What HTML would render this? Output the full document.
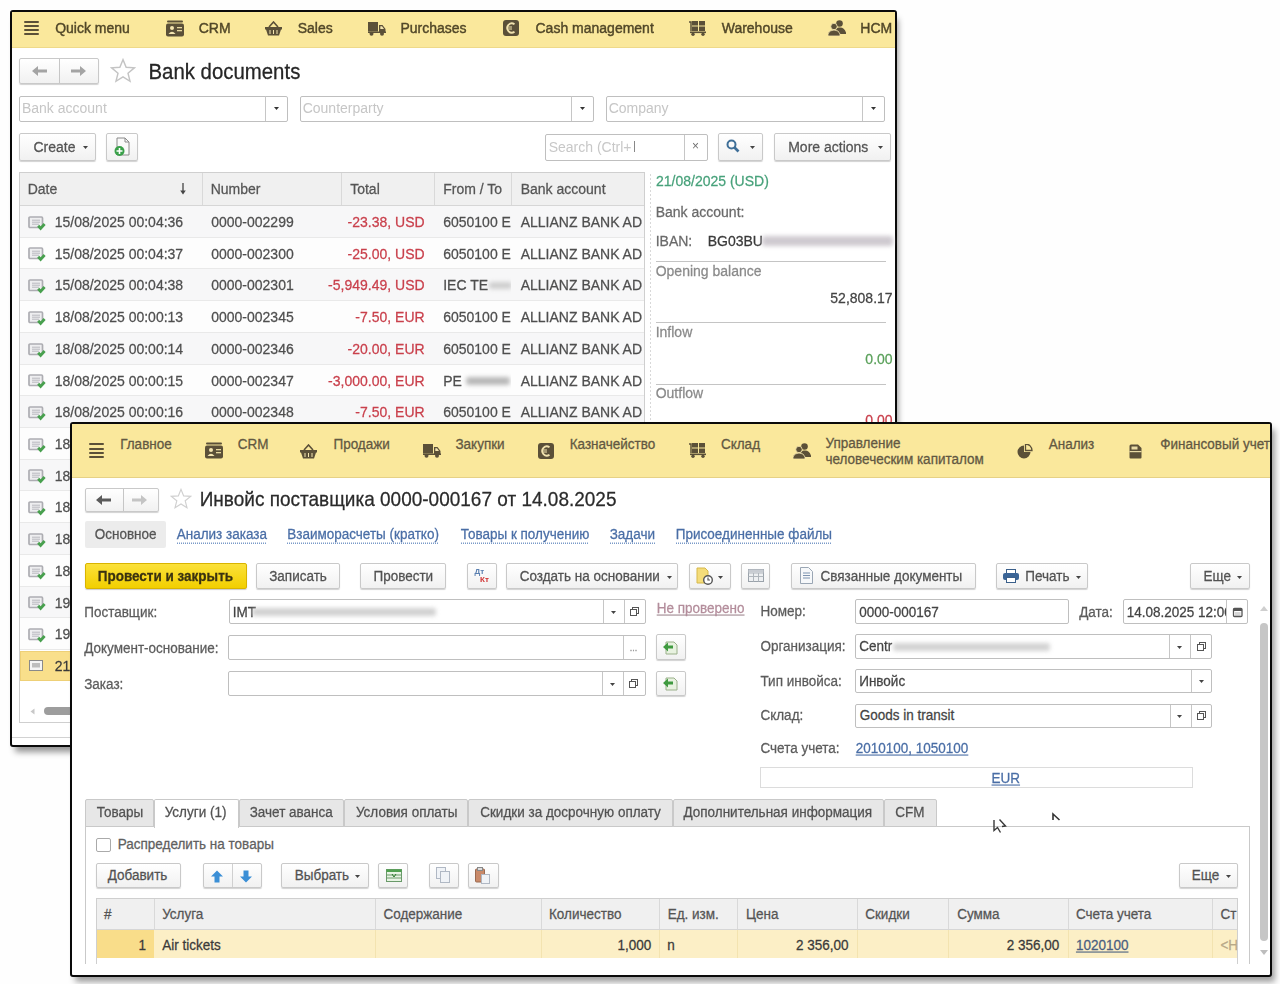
<!DOCTYPE html><html><head><meta charset="utf-8"><style>
html,body{margin:0;padding:0;width:1280px;height:984px;overflow:hidden;background:#fefefe;font-family:"Liberation Sans",sans-serif}
div{position:absolute;box-sizing:border-box}
.t{line-height:20px;white-space:nowrap;transform:scaleY(1.1);transform-origin:50% 50%;-webkit-text-stroke:0.25px currentColor}
.u{text-decoration:underline dotted;text-underline-offset:3px}
</style></head><body><div id="wrap" style="left:0;top:0;width:1280px;height:984px;filter:blur(0.35px)">
<div style="left:10.00px;top:10.00px;width:887.00px;height:737.00px;background:#fff;border:2px solid #0a0a0a;border-radius:3px;box-shadow:3px 7px 6px -2px rgba(0,0,0,0.42)"></div>
<div style="left:12.00px;top:12.00px;width:883.00px;height:36.00px;background:#fae89c;border-bottom:1px solid #eed98a"></div>
<div style="left:24.00px;top:20.60px;width:15.00px;height:2.60px;background:#5b5038;border-radius:1px"></div>
<div style="left:24.00px;top:24.60px;width:15.00px;height:2.60px;background:#5b5038;border-radius:1px"></div>
<div style="left:24.00px;top:28.60px;width:15.00px;height:2.60px;background:#5b5038;border-radius:1px"></div>
<div style="left:24.00px;top:32.60px;width:15.00px;height:2.60px;background:#5b5038;border-radius:1px"></div>
<div class="t" style="left:55.20px;top:17.00px;font-size:14px;color:#514728;font-weight:400;-webkit-text-stroke:0.4px currentColor">Quick menu</div>
<div class="t" style="left:198.70px;top:17.00px;font-size:14px;color:#514728;font-weight:400;-webkit-text-stroke:0.4px currentColor">CRM</div>
<div class="t" style="left:297.70px;top:17.00px;font-size:14px;color:#514728;font-weight:400;-webkit-text-stroke:0.4px currentColor">Sales</div>
<div class="t" style="left:400.45px;top:17.00px;font-size:14px;color:#514728;font-weight:400;-webkit-text-stroke:0.4px currentColor">Purchases</div>
<div class="t" style="left:535.50px;top:17.00px;font-size:14px;color:#514728;font-weight:400;-webkit-text-stroke:0.4px currentColor">Cash management</div>
<div class="t" style="left:721.70px;top:17.00px;font-size:14px;color:#514728;font-weight:400;-webkit-text-stroke:0.4px currentColor">Warehouse</div>
<div class="t" style="left:860.30px;top:17.00px;font-size:14px;color:#514728;font-weight:400;-webkit-text-stroke:0.4px currentColor">HCM</div>
<svg style="position:absolute;left:165.50px;top:19.50px" width="18" height="17" viewBox="0 0 18 17"><rect x="1" y="0.5" width="16" height="2" rx="1" fill="#5b5038"/><rect x="0" y="3.5" width="18" height="13" rx="2" fill="#5b5038"/><circle cx="6" cy="8" r="2" fill="#f5e6b0"/><path d="M2.5 14 Q6 9.5 9.5 14Z" fill="#f5e6b0"/><rect x="11" y="7" width="5" height="1.3" fill="#e8d9a0"/><rect x="11" y="10" width="5" height="1.3" fill="#e8d9a0"/></svg>
<svg style="position:absolute;left:264.50px;top:21.00px" width="17" height="15" viewBox="0 0 17 15"><path d="M4 6 L8.5 1 L13 6" stroke="#5b5038" stroke-width="1.6" fill="none"/><path d="M0 6H17V8.5H16L14 14.5H3L1 8.5H0Z" fill="#5b5038"/><path d="M5 9V13M8.5 9V13M12 9V13" stroke="#f5e6b0" stroke-width="1"/></svg>
<svg style="position:absolute;left:367.50px;top:21.50px" width="18" height="14" viewBox="0 0 18 14"><rect x="0" y="0" width="10" height="9.5" fill="#5b5038"/><path d="M11 3H14.5L17.5 7V10H11Z" fill="#5b5038"/><path d="M12.3 4.3H14L16 7H12.3Z" fill="#f5e6b0"/><rect x="0" y="9.5" width="18" height="1.5" fill="#5b5038"/><circle cx="3.5" cy="11.8" r="2" fill="#5b5038"/><circle cx="14" cy="11.8" r="2" fill="#5b5038"/></svg>
<svg style="position:absolute;left:503.00px;top:20.00px" width="16" height="16" viewBox="0 0 16 16"><rect x="0" y="0" width="16" height="16" rx="3" fill="#5b5038"/><path d="M11.5 4.2 A4.6 4.6 0 1 0 11.5 11.8" stroke="#f1e2ae" stroke-width="1.8" fill="none"/><path d="M4 7H9M4 9H9" stroke="#f1e2ae" stroke-width="1"/></svg>
<svg style="position:absolute;left:689.00px;top:20.50px" width="17" height="15" viewBox="0 0 17 15"><path d="M0 1H2V10" stroke="#5b5038" stroke-width="1.5" fill="none"/><rect x="3" y="0" width="6" height="4.5" fill="#5b5038"/><rect x="10" y="0" width="6" height="4.5" fill="#5b5038"/><rect x="3" y="5.5" width="6" height="4.5" fill="#5b5038"/><rect x="10" y="5.5" width="6" height="4.5" fill="#5b5038"/><rect x="1" y="10.5" width="16" height="1.6" fill="#5b5038"/><circle cx="4" cy="13.3" r="1.7" fill="#5b5038"/><circle cx="14" cy="13.3" r="1.7" fill="#5b5038"/></svg>
<svg style="position:absolute;left:827.80px;top:20.00px" width="18" height="16" viewBox="0 0 18 16"><circle cx="11.5" cy="3.5" r="3.3" fill="#5b5038"/><path d="M7 13 Q8 7 11.5 7.5 Q16 7 18 12.5V14H9Z" fill="#5b5038"/><circle cx="6" cy="6.5" r="3.2" fill="#5b5038" stroke="#f5e6b0" stroke-width="0.8"/><path d="M0 16V14 Q1 10 6 10 Q11 10 12 14V16Z" fill="#5b5038" stroke="#f5e6b0" stroke-width="0.8"/></svg>
<div style="left:18.75px;top:58.00px;width:80.00px;height:25.75px;background:linear-gradient(#ffffff,#f1f1f1);border:1px solid #c9c9c9;border-radius:2px;box-shadow:0 1px 1px rgba(0,0,0,0.18);"></div>
<div style="left:59.00px;top:59.00px;width:1.00px;height:24.00px;background:#c6c6c6"></div>
<svg style="position:absolute;left:31.50px;top:65.80px" width="15" height="10" viewBox="0 0 15 10"><path d="M0 5L6 0V3.5H15V6.5H6V10Z" fill="#a4a4a4"/></svg>
<svg style="position:absolute;left:70.70px;top:65.80px" width="15" height="10" viewBox="0 0 15 10"><path d="M15 5L9 0V3.5H0V6.5H9V10Z" fill="#a4a4a4"/></svg>
<svg style="position:absolute;left:110.00px;top:58.00px" width="26" height="26" viewBox="0 0 24 24"><path d="M12 1.5 L14.9 8.6 L22.5 9.1 L16.6 14 L18.5 21.5 L12 17.4 L5.5 21.5 L7.4 14 L1.5 9.1 L9.1 8.6Z" fill="#fff" stroke="#c4c4c4" stroke-width="1.3"/></svg>
<div class="t" style="left:148.45px;top:60.96px;font-size:20.4px;color:#262626;font-weight:400;">Bank documents</div>
<div style="left:18.75px;top:95.50px;width:269.25px;height:26.00px;background:#fff;border:1px solid #bfbfbf;border-radius:2px;"></div>
<div style="left:264.50px;top:96.00px;width:1.00px;height:25.00px;background:#c6c6c6"></div>
<div class="t" style="left:21.95px;top:97.20px;font-size:14px;color:#c6c6c6;font-weight:400;-webkit-text-stroke:0">Bank account</div>
<svg style="position:absolute;left:273.75px;top:107.00px" width="5" height="3.5" viewBox="0 0 5 3.5"><path d="M0 0H5L2.5 3Z" fill="#333"/></svg>
<div style="left:299.50px;top:95.50px;width:294.25px;height:26.00px;background:#fff;border:1px solid #bfbfbf;border-radius:2px;"></div>
<div style="left:570.50px;top:96.00px;width:1.00px;height:25.00px;background:#c6c6c6"></div>
<div class="t" style="left:302.70px;top:97.20px;font-size:14px;color:#c6c6c6;font-weight:400;-webkit-text-stroke:0">Counterparty</div>
<svg style="position:absolute;left:579.62px;top:107.00px" width="5" height="3.5" viewBox="0 0 5 3.5"><path d="M0 0H5L2.5 3Z" fill="#333"/></svg>
<div style="left:605.50px;top:95.50px;width:279.00px;height:26.00px;background:#fff;border:1px solid #bfbfbf;border-radius:2px;"></div>
<div style="left:861.75px;top:96.00px;width:1.00px;height:25.00px;background:#c6c6c6"></div>
<div class="t" style="left:608.70px;top:97.20px;font-size:14px;color:#c6c6c6;font-weight:400;-webkit-text-stroke:0">Company</div>
<svg style="position:absolute;left:870.62px;top:107.00px" width="5" height="3.5" viewBox="0 0 5 3.5"><path d="M0 0H5L2.5 3Z" fill="#333"/></svg>
<div style="left:18.75px;top:132.50px;width:76.75px;height:28.00px;background:linear-gradient(#ffffff,#f1f1f1);border:1px solid #c9c9c9;border-radius:2px;box-shadow:0 1px 1px rgba(0,0,0,0.18);"></div>
<div class="t" style="left:33.45px;top:135.50px;font-size:14px;color:#545454;font-weight:400;">Create</div>
<svg style="position:absolute;left:83.00px;top:145.50px" width="5" height="3.5" viewBox="0 0 5 3.5"><path d="M0 0H5L2.5 3Z" fill="#444"/></svg>
<div style="left:106.00px;top:132.50px;width:32.00px;height:28.00px;background:linear-gradient(#ffffff,#f1f1f1);border:1px solid #c9c9c9;border-radius:2px;box-shadow:0 1px 1px rgba(0,0,0,0.18);"></div>
<svg style="position:absolute;left:113.00px;top:137.00px" width="20" height="20" viewBox="0 0 20 20"><path d="M4 1H12L16 5V18H4Z" fill="#fafafa" stroke="#8a8a8a" stroke-width="1"/><path d="M12 1V5H16" fill="none" stroke="#8a8a8a" stroke-width="1"/><circle cx="6.5" cy="14" r="5" fill="#3aa04a"/><path d="M6.5 11V17M3.5 14H9.5" stroke="#fff" stroke-width="1.6"/></svg>
<div style="left:545.00px;top:133.75px;width:162.50px;height:26.75px;background:#fff;border:1px solid #bfbfbf;border-radius:2px;"></div>
<div class="t" style="left:548.70px;top:135.50px;font-size:14px;color:#c8c8c8;font-weight:400;-webkit-text-stroke:0">Search (Ctrl+</div>
<div style="left:633.50px;top:141.00px;width:1.00px;height:11.00px;background:#888"></div>
<div style="left:683.75px;top:134.50px;width:1.00px;height:25.50px;background:#c6c6c6"></div>
<div class="t" style="left:395.50px;width:600px;text-align:center;top:136.30px;font-size:12px;color:#707070;font-weight:400;-webkit-text-stroke:0">×</div>
<div style="left:718.00px;top:132.50px;width:45.00px;height:28.00px;background:linear-gradient(#ffffff,#f1f1f1);border:1px solid #c9c9c9;border-radius:2px;box-shadow:0 1px 1px rgba(0,0,0,0.18);"></div>
<svg style="position:absolute;left:726.00px;top:139.00px" width="14" height="15" viewBox="0 0 14 15"><circle cx="5.5" cy="5.5" r="4" stroke="#3f6f98" stroke-width="2" fill="none"/><path d="M8.5 8.5L12.5 12.5" stroke="#3f6f98" stroke-width="2.6"/></svg>
<svg style="position:absolute;left:750.00px;top:145.50px" width="5" height="3.5" viewBox="0 0 5 3.5"><path d="M0 0H5L2.5 3Z" fill="#444"/></svg>
<div style="left:773.75px;top:132.50px;width:117.50px;height:28.00px;background:linear-gradient(#ffffff,#f1f1f1);border:1px solid #c9c9c9;border-radius:2px;box-shadow:0 1px 1px rgba(0,0,0,0.18);"></div>
<div class="t" style="left:788.20px;top:135.50px;font-size:14px;color:#545454;font-weight:400;">More actions</div>
<svg style="position:absolute;left:877.50px;top:145.50px" width="5" height="3.5" viewBox="0 0 5 3.5"><path d="M0 0H5L2.5 3Z" fill="#444"/></svg>
<div style="left:18.75px;top:172.00px;width:626.25px;height:551.00px;background:#fff;border:1px solid #cfcfcf"></div>
<div style="left:19.75px;top:173.00px;width:624.25px;height:33.00px;background:#f0f0f0;border-bottom:1px solid #d6d6d6"></div>
<div style="left:202.00px;top:173.00px;width:1.00px;height:32.00px;background:#d9d9d9"></div>
<div style="left:341.20px;top:173.00px;width:1.00px;height:32.00px;background:#d9d9d9"></div>
<div style="left:434.20px;top:173.00px;width:1.00px;height:32.00px;background:#d9d9d9"></div>
<div style="left:511.20px;top:173.00px;width:1.00px;height:32.00px;background:#d9d9d9"></div>
<div class="t" style="left:27.70px;top:177.50px;font-size:14px;color:#555;font-weight:400;">Date</div>
<div class="t" style="left:210.70px;top:177.50px;font-size:14px;color:#555;font-weight:400;">Number</div>
<div class="t" style="left:350.20px;top:177.50px;font-size:14px;color:#555;font-weight:400;">Total</div>
<div class="t" style="left:443.20px;top:177.50px;font-size:14px;color:#555;font-weight:400;">From / To</div>
<div class="t" style="left:520.70px;top:177.50px;font-size:14px;color:#555;font-weight:400;">Bank account</div>
<svg style="position:absolute;left:178.50px;top:182.50px" width="8" height="12" viewBox="0 0 8 12"><path d="M4 0V10" stroke="#444" stroke-width="1.3"/><path d="M1.2 7.5L4 11.5L6.8 7.5Z" fill="#444"/></svg>
<div style="left:19.75px;top:206.00px;width:624.25px;height:31.72px;background:#f7f7f8;border-bottom:1px solid #e9e9e9"></div>
<svg style="position:absolute;left:27.60px;top:215.70px" width="18" height="15" viewBox="0 0 18 15"><rect x="1" y="1" width="13.5" height="10.5" rx="1" fill="#eeeef0" stroke="#adadb2" stroke-width="1.7"/><path d="M4 4.2H12M4 6.2H12M4 8.2H11" stroke="#b9b9be" stroke-width="1"/><path d="M10.2 9.8 L12.6 12.4 L16.6 8" stroke="#48a04e" stroke-width="2.8" fill="none"/></svg>
<div class="t" style="left:54.70px;top:211.00px;font-size:14px;color:#4f4f4f;font-weight:400;">15/08/2025 00:04:36</div>
<div class="t" style="left:211.20px;top:211.00px;font-size:14px;color:#4f4f4f;font-weight:400;">0000-002299</div>
<div class="t" style="right:855.40px;text-align:right;top:211.00px;font-size:14px;color:#c9404c;font-weight:400;">-23.38, USD</div>
<div style="left:0;top:0;width:1280px;height:984px;clip-path:inset(206.0px 769px 746.28px 434px)">
<div class="t" style="left:443.20px;top:211.00px;font-size:14px;color:#4f4f4f;font-weight:400;">6050100 E</div>
</div>
<div style="left:0;top:0;width:1280px;height:984px;clip-path:inset(206.0px 635px 746.28px 511px)">
<div class="t" style="left:520.70px;top:211.00px;font-size:14px;color:#4f4f4f;font-weight:400;">ALLIANZ BANK AD</div>
</div>
<div style="left:19.75px;top:237.72px;width:624.25px;height:31.72px;background:#fdfdfd;border-bottom:1px solid #e9e9e9"></div>
<svg style="position:absolute;left:27.60px;top:247.42px" width="18" height="15" viewBox="0 0 18 15"><rect x="1" y="1" width="13.5" height="10.5" rx="1" fill="#eeeef0" stroke="#adadb2" stroke-width="1.7"/><path d="M4 4.2H12M4 6.2H12M4 8.2H11" stroke="#b9b9be" stroke-width="1"/><path d="M10.2 9.8 L12.6 12.4 L16.6 8" stroke="#48a04e" stroke-width="2.8" fill="none"/></svg>
<div class="t" style="left:54.70px;top:242.72px;font-size:14px;color:#4f4f4f;font-weight:400;">15/08/2025 00:04:37</div>
<div class="t" style="left:211.20px;top:242.72px;font-size:14px;color:#4f4f4f;font-weight:400;">0000-002300</div>
<div class="t" style="right:855.40px;text-align:right;top:242.72px;font-size:14px;color:#c9404c;font-weight:400;">-25.00, USD</div>
<div style="left:0;top:0;width:1280px;height:984px;clip-path:inset(237.72px 769px 714.56px 434px)">
<div class="t" style="left:443.20px;top:242.72px;font-size:14px;color:#4f4f4f;font-weight:400;">6050100 E</div>
</div>
<div style="left:0;top:0;width:1280px;height:984px;clip-path:inset(237.72px 635px 714.56px 511px)">
<div class="t" style="left:520.70px;top:242.72px;font-size:14px;color:#4f4f4f;font-weight:400;">ALLIANZ BANK AD</div>
</div>
<div style="left:19.75px;top:269.44px;width:624.25px;height:31.72px;background:#f7f7f8;border-bottom:1px solid #e9e9e9"></div>
<svg style="position:absolute;left:27.60px;top:279.14px" width="18" height="15" viewBox="0 0 18 15"><rect x="1" y="1" width="13.5" height="10.5" rx="1" fill="#eeeef0" stroke="#adadb2" stroke-width="1.7"/><path d="M4 4.2H12M4 6.2H12M4 8.2H11" stroke="#b9b9be" stroke-width="1"/><path d="M10.2 9.8 L12.6 12.4 L16.6 8" stroke="#48a04e" stroke-width="2.8" fill="none"/></svg>
<div class="t" style="left:54.70px;top:274.44px;font-size:14px;color:#4f4f4f;font-weight:400;">15/08/2025 00:04:38</div>
<div class="t" style="left:211.20px;top:274.44px;font-size:14px;color:#4f4f4f;font-weight:400;">0000-002301</div>
<div class="t" style="right:855.40px;text-align:right;top:274.44px;font-size:14px;color:#c9404c;font-weight:400;">-5,949.49, USD</div>
<div style="left:0;top:0;width:1280px;height:984px;clip-path:inset(269.44px 769px 682.84px 434px)">
<div class="t" style="left:443.20px;top:274.44px;font-size:14px;color:#4f4f4f;font-weight:400;">IEC TE</div>
<div style="left:489.00px;top:281.94px;width:23.00px;height:7.00px;background:#c4c4c4;filter:blur(2px);border-radius:3px;opacity:.8"></div>
</div>
<div style="left:0;top:0;width:1280px;height:984px;clip-path:inset(269.44px 635px 682.84px 511px)">
<div class="t" style="left:520.70px;top:274.44px;font-size:14px;color:#4f4f4f;font-weight:400;">ALLIANZ BANK AD</div>
</div>
<div style="left:19.75px;top:301.16px;width:624.25px;height:31.72px;background:#fdfdfd;border-bottom:1px solid #e9e9e9"></div>
<svg style="position:absolute;left:27.60px;top:310.86px" width="18" height="15" viewBox="0 0 18 15"><rect x="1" y="1" width="13.5" height="10.5" rx="1" fill="#eeeef0" stroke="#adadb2" stroke-width="1.7"/><path d="M4 4.2H12M4 6.2H12M4 8.2H11" stroke="#b9b9be" stroke-width="1"/><path d="M10.2 9.8 L12.6 12.4 L16.6 8" stroke="#48a04e" stroke-width="2.8" fill="none"/></svg>
<div class="t" style="left:54.70px;top:306.16px;font-size:14px;color:#4f4f4f;font-weight:400;">18/08/2025 00:00:13</div>
<div class="t" style="left:211.20px;top:306.16px;font-size:14px;color:#4f4f4f;font-weight:400;">0000-002345</div>
<div class="t" style="right:855.40px;text-align:right;top:306.16px;font-size:14px;color:#c9404c;font-weight:400;">-7.50, EUR</div>
<div style="left:0;top:0;width:1280px;height:984px;clip-path:inset(301.15999999999997px 769px 651.12px 434px)">
<div class="t" style="left:443.20px;top:306.16px;font-size:14px;color:#4f4f4f;font-weight:400;">6050100 E</div>
</div>
<div style="left:0;top:0;width:1280px;height:984px;clip-path:inset(301.15999999999997px 635px 651.12px 511px)">
<div class="t" style="left:520.70px;top:306.16px;font-size:14px;color:#4f4f4f;font-weight:400;">ALLIANZ BANK AD</div>
</div>
<div style="left:19.75px;top:332.88px;width:624.25px;height:31.72px;background:#f7f7f8;border-bottom:1px solid #e9e9e9"></div>
<svg style="position:absolute;left:27.60px;top:342.58px" width="18" height="15" viewBox="0 0 18 15"><rect x="1" y="1" width="13.5" height="10.5" rx="1" fill="#eeeef0" stroke="#adadb2" stroke-width="1.7"/><path d="M4 4.2H12M4 6.2H12M4 8.2H11" stroke="#b9b9be" stroke-width="1"/><path d="M10.2 9.8 L12.6 12.4 L16.6 8" stroke="#48a04e" stroke-width="2.8" fill="none"/></svg>
<div class="t" style="left:54.70px;top:337.88px;font-size:14px;color:#4f4f4f;font-weight:400;">18/08/2025 00:00:14</div>
<div class="t" style="left:211.20px;top:337.88px;font-size:14px;color:#4f4f4f;font-weight:400;">0000-002346</div>
<div class="t" style="right:855.40px;text-align:right;top:337.88px;font-size:14px;color:#c9404c;font-weight:400;">-20.00, EUR</div>
<div style="left:0;top:0;width:1280px;height:984px;clip-path:inset(332.88px 769px 619.4px 434px)">
<div class="t" style="left:443.20px;top:337.88px;font-size:14px;color:#4f4f4f;font-weight:400;">6050100 E</div>
</div>
<div style="left:0;top:0;width:1280px;height:984px;clip-path:inset(332.88px 635px 619.4px 511px)">
<div class="t" style="left:520.70px;top:337.88px;font-size:14px;color:#4f4f4f;font-weight:400;">ALLIANZ BANK AD</div>
</div>
<div style="left:19.75px;top:364.60px;width:624.25px;height:31.72px;background:#fdfdfd;border-bottom:1px solid #e9e9e9"></div>
<svg style="position:absolute;left:27.60px;top:374.30px" width="18" height="15" viewBox="0 0 18 15"><rect x="1" y="1" width="13.5" height="10.5" rx="1" fill="#eeeef0" stroke="#adadb2" stroke-width="1.7"/><path d="M4 4.2H12M4 6.2H12M4 8.2H11" stroke="#b9b9be" stroke-width="1"/><path d="M10.2 9.8 L12.6 12.4 L16.6 8" stroke="#48a04e" stroke-width="2.8" fill="none"/></svg>
<div class="t" style="left:54.70px;top:369.60px;font-size:14px;color:#4f4f4f;font-weight:400;">18/08/2025 00:00:15</div>
<div class="t" style="left:211.20px;top:369.60px;font-size:14px;color:#4f4f4f;font-weight:400;">0000-002347</div>
<div class="t" style="right:855.40px;text-align:right;top:369.60px;font-size:14px;color:#c9404c;font-weight:400;">-3,000.00, EUR</div>
<div style="left:0;top:0;width:1280px;height:984px;clip-path:inset(364.6px 769px 587.68px 434px)">
<div class="t" style="left:443.20px;top:369.60px;font-size:14px;color:#4f4f4f;font-weight:400;">PE</div>
<div style="left:466.00px;top:376.60px;width:44.00px;height:8.00px;background:#a8a8a8;filter:blur(2px);border-radius:3px;opacity:.8"></div>
</div>
<div style="left:0;top:0;width:1280px;height:984px;clip-path:inset(364.6px 635px 587.68px 511px)">
<div class="t" style="left:520.70px;top:369.60px;font-size:14px;color:#4f4f4f;font-weight:400;">ALLIANZ BANK AD</div>
</div>
<div style="left:19.75px;top:396.32px;width:624.25px;height:31.72px;background:#f7f7f8;border-bottom:1px solid #e9e9e9"></div>
<svg style="position:absolute;left:27.60px;top:406.02px" width="18" height="15" viewBox="0 0 18 15"><rect x="1" y="1" width="13.5" height="10.5" rx="1" fill="#eeeef0" stroke="#adadb2" stroke-width="1.7"/><path d="M4 4.2H12M4 6.2H12M4 8.2H11" stroke="#b9b9be" stroke-width="1"/><path d="M10.2 9.8 L12.6 12.4 L16.6 8" stroke="#48a04e" stroke-width="2.8" fill="none"/></svg>
<div class="t" style="left:54.70px;top:401.32px;font-size:14px;color:#4f4f4f;font-weight:400;">18/08/2025 00:00:16</div>
<div class="t" style="left:211.20px;top:401.32px;font-size:14px;color:#4f4f4f;font-weight:400;">0000-002348</div>
<div class="t" style="right:855.40px;text-align:right;top:401.32px;font-size:14px;color:#c9404c;font-weight:400;">-7.50, EUR</div>
<div style="left:0;top:0;width:1280px;height:984px;clip-path:inset(396.32px 769px 555.96px 434px)">
<div class="t" style="left:443.20px;top:401.32px;font-size:14px;color:#4f4f4f;font-weight:400;">6050100 E</div>
</div>
<div style="left:0;top:0;width:1280px;height:984px;clip-path:inset(396.32px 635px 555.96px 511px)">
<div class="t" style="left:520.70px;top:401.32px;font-size:14px;color:#4f4f4f;font-weight:400;">ALLIANZ BANK AD</div>
</div>
<div style="left:19.75px;top:428.04px;width:624.25px;height:31.72px;background:#fdfdfd;border-bottom:1px solid #e9e9e9"></div>
<svg style="position:absolute;left:27.60px;top:437.74px" width="18" height="15" viewBox="0 0 18 15"><rect x="1" y="1" width="13.5" height="10.5" rx="1" fill="#eeeef0" stroke="#adadb2" stroke-width="1.7"/><path d="M4 4.2H12M4 6.2H12M4 8.2H11" stroke="#b9b9be" stroke-width="1"/><path d="M10.2 9.8 L12.6 12.4 L16.6 8" stroke="#48a04e" stroke-width="2.8" fill="none"/></svg>
<div class="t" style="left:54.70px;top:433.04px;font-size:14px;color:#4f4f4f;font-weight:400;">18/08/2025 00:00:17</div>
<div style="left:19.75px;top:459.76px;width:624.25px;height:31.72px;background:#f7f7f8;border-bottom:1px solid #e9e9e9"></div>
<svg style="position:absolute;left:27.60px;top:469.46px" width="18" height="15" viewBox="0 0 18 15"><rect x="1" y="1" width="13.5" height="10.5" rx="1" fill="#eeeef0" stroke="#adadb2" stroke-width="1.7"/><path d="M4 4.2H12M4 6.2H12M4 8.2H11" stroke="#b9b9be" stroke-width="1"/><path d="M10.2 9.8 L12.6 12.4 L16.6 8" stroke="#48a04e" stroke-width="2.8" fill="none"/></svg>
<div class="t" style="left:54.70px;top:464.76px;font-size:14px;color:#4f4f4f;font-weight:400;">18/08/2025 00:00:18</div>
<div style="left:19.75px;top:491.48px;width:624.25px;height:31.72px;background:#fdfdfd;border-bottom:1px solid #e9e9e9"></div>
<svg style="position:absolute;left:27.60px;top:501.18px" width="18" height="15" viewBox="0 0 18 15"><rect x="1" y="1" width="13.5" height="10.5" rx="1" fill="#eeeef0" stroke="#adadb2" stroke-width="1.7"/><path d="M4 4.2H12M4 6.2H12M4 8.2H11" stroke="#b9b9be" stroke-width="1"/><path d="M10.2 9.8 L12.6 12.4 L16.6 8" stroke="#48a04e" stroke-width="2.8" fill="none"/></svg>
<div class="t" style="left:54.70px;top:496.48px;font-size:14px;color:#4f4f4f;font-weight:400;">18/08/2025 00:00:19</div>
<div style="left:19.75px;top:523.20px;width:624.25px;height:31.72px;background:#f7f7f8;border-bottom:1px solid #e9e9e9"></div>
<svg style="position:absolute;left:27.60px;top:532.90px" width="18" height="15" viewBox="0 0 18 15"><rect x="1" y="1" width="13.5" height="10.5" rx="1" fill="#eeeef0" stroke="#adadb2" stroke-width="1.7"/><path d="M4 4.2H12M4 6.2H12M4 8.2H11" stroke="#b9b9be" stroke-width="1"/><path d="M10.2 9.8 L12.6 12.4 L16.6 8" stroke="#48a04e" stroke-width="2.8" fill="none"/></svg>
<div class="t" style="left:54.70px;top:528.20px;font-size:14px;color:#4f4f4f;font-weight:400;">18/08/2025 00:00:20</div>
<div style="left:19.75px;top:554.92px;width:624.25px;height:31.72px;background:#fdfdfd;border-bottom:1px solid #e9e9e9"></div>
<svg style="position:absolute;left:27.60px;top:564.62px" width="18" height="15" viewBox="0 0 18 15"><rect x="1" y="1" width="13.5" height="10.5" rx="1" fill="#eeeef0" stroke="#adadb2" stroke-width="1.7"/><path d="M4 4.2H12M4 6.2H12M4 8.2H11" stroke="#b9b9be" stroke-width="1"/><path d="M10.2 9.8 L12.6 12.4 L16.6 8" stroke="#48a04e" stroke-width="2.8" fill="none"/></svg>
<div class="t" style="left:54.70px;top:559.92px;font-size:14px;color:#4f4f4f;font-weight:400;">18/08/2025 00:00:21</div>
<div style="left:19.75px;top:586.64px;width:624.25px;height:31.72px;background:#f7f7f8;border-bottom:1px solid #e9e9e9"></div>
<svg style="position:absolute;left:27.60px;top:596.34px" width="18" height="15" viewBox="0 0 18 15"><rect x="1" y="1" width="13.5" height="10.5" rx="1" fill="#eeeef0" stroke="#adadb2" stroke-width="1.7"/><path d="M4 4.2H12M4 6.2H12M4 8.2H11" stroke="#b9b9be" stroke-width="1"/><path d="M10.2 9.8 L12.6 12.4 L16.6 8" stroke="#48a04e" stroke-width="2.8" fill="none"/></svg>
<div class="t" style="left:54.70px;top:591.64px;font-size:14px;color:#4f4f4f;font-weight:400;">19/08/2025 00:00:10</div>
<div style="left:19.75px;top:618.36px;width:624.25px;height:31.72px;background:#fdfdfd;border-bottom:1px solid #e9e9e9"></div>
<svg style="position:absolute;left:27.60px;top:628.06px" width="18" height="15" viewBox="0 0 18 15"><rect x="1" y="1" width="13.5" height="10.5" rx="1" fill="#eeeef0" stroke="#adadb2" stroke-width="1.7"/><path d="M4 4.2H12M4 6.2H12M4 8.2H11" stroke="#b9b9be" stroke-width="1"/><path d="M10.2 9.8 L12.6 12.4 L16.6 8" stroke="#48a04e" stroke-width="2.8" fill="none"/></svg>
<div class="t" style="left:54.70px;top:623.36px;font-size:14px;color:#4f4f4f;font-weight:400;">19/08/2025 00:00:11</div>
<div style="left:19.75px;top:651.38px;width:624.25px;height:29.22px;background:#f9df8b;border:1px solid #eed077"></div>
<svg style="position:absolute;left:28.60px;top:660.08px" width="17" height="14" viewBox="0 0 17 14"><rect x="0.5" y="0.5" width="13" height="10" fill="#f4f4f4" stroke="#8a8a8a" stroke-width="1"/><rect x="3" y="3" width="8" height="4.5" fill="#bdbdbd"/></svg>
<div class="t" style="left:54.70px;top:655.08px;font-size:14px;color:#3a3a3a;font-weight:400;">21/08/2025 00:00:00</div>
<svg style="position:absolute;left:29.50px;top:707.50px" width="5" height="7" viewBox="0 0 5 7"><path d="M4.5 0.5V6.5L0.5 3.5Z" fill="#c8c8c8"/></svg>
<div style="left:44.00px;top:707.00px;width:256.00px;height:7.50px;background:#9d9d9d;border-radius:4px"></div>
<div style="left:12.00px;top:737.00px;width:883.00px;height:1.00px;background:#d2d2d2"></div>
<div style="left:649.50px;top:174.00px;width:1.00px;height:2.00px;background:#d8d8d8"></div>
<div style="left:649.50px;top:178.00px;width:1.00px;height:2.00px;background:#d8d8d8"></div>
<div style="left:649.50px;top:182.00px;width:1.00px;height:2.00px;background:#d8d8d8"></div>
<div style="left:649.50px;top:186.00px;width:1.00px;height:2.00px;background:#d8d8d8"></div>
<div style="left:649.50px;top:190.00px;width:1.00px;height:2.00px;background:#d8d8d8"></div>
<div style="left:649.50px;top:194.00px;width:1.00px;height:2.00px;background:#d8d8d8"></div>
<div style="left:649.50px;top:198.00px;width:1.00px;height:2.00px;background:#d8d8d8"></div>
<div style="left:649.50px;top:202.00px;width:1.00px;height:2.00px;background:#d8d8d8"></div>
<div style="left:649.50px;top:206.00px;width:1.00px;height:2.00px;background:#d8d8d8"></div>
<div style="left:649.50px;top:210.00px;width:1.00px;height:2.00px;background:#d8d8d8"></div>
<div style="left:649.50px;top:214.00px;width:1.00px;height:2.00px;background:#d8d8d8"></div>
<div style="left:649.50px;top:218.00px;width:1.00px;height:2.00px;background:#d8d8d8"></div>
<div style="left:649.50px;top:222.00px;width:1.00px;height:2.00px;background:#d8d8d8"></div>
<div style="left:649.50px;top:226.00px;width:1.00px;height:2.00px;background:#d8d8d8"></div>
<div style="left:649.50px;top:230.00px;width:1.00px;height:2.00px;background:#d8d8d8"></div>
<div style="left:649.50px;top:234.00px;width:1.00px;height:2.00px;background:#d8d8d8"></div>
<div style="left:649.50px;top:238.00px;width:1.00px;height:2.00px;background:#d8d8d8"></div>
<div style="left:649.50px;top:242.00px;width:1.00px;height:2.00px;background:#d8d8d8"></div>
<div style="left:649.50px;top:246.00px;width:1.00px;height:2.00px;background:#d8d8d8"></div>
<div style="left:649.50px;top:250.00px;width:1.00px;height:2.00px;background:#d8d8d8"></div>
<div style="left:649.50px;top:254.00px;width:1.00px;height:2.00px;background:#d8d8d8"></div>
<div style="left:649.50px;top:258.00px;width:1.00px;height:2.00px;background:#d8d8d8"></div>
<div style="left:649.50px;top:262.00px;width:1.00px;height:2.00px;background:#d8d8d8"></div>
<div style="left:649.50px;top:266.00px;width:1.00px;height:2.00px;background:#d8d8d8"></div>
<div style="left:649.50px;top:270.00px;width:1.00px;height:2.00px;background:#d8d8d8"></div>
<div style="left:649.50px;top:274.00px;width:1.00px;height:2.00px;background:#d8d8d8"></div>
<div style="left:649.50px;top:278.00px;width:1.00px;height:2.00px;background:#d8d8d8"></div>
<div style="left:649.50px;top:282.00px;width:1.00px;height:2.00px;background:#d8d8d8"></div>
<div style="left:649.50px;top:286.00px;width:1.00px;height:2.00px;background:#d8d8d8"></div>
<div style="left:649.50px;top:290.00px;width:1.00px;height:2.00px;background:#d8d8d8"></div>
<div style="left:649.50px;top:294.00px;width:1.00px;height:2.00px;background:#d8d8d8"></div>
<div style="left:649.50px;top:298.00px;width:1.00px;height:2.00px;background:#d8d8d8"></div>
<div style="left:649.50px;top:302.00px;width:1.00px;height:2.00px;background:#d8d8d8"></div>
<div style="left:649.50px;top:306.00px;width:1.00px;height:2.00px;background:#d8d8d8"></div>
<div style="left:649.50px;top:310.00px;width:1.00px;height:2.00px;background:#d8d8d8"></div>
<div style="left:649.50px;top:314.00px;width:1.00px;height:2.00px;background:#d8d8d8"></div>
<div style="left:649.50px;top:318.00px;width:1.00px;height:2.00px;background:#d8d8d8"></div>
<div style="left:649.50px;top:322.00px;width:1.00px;height:2.00px;background:#d8d8d8"></div>
<div style="left:649.50px;top:326.00px;width:1.00px;height:2.00px;background:#d8d8d8"></div>
<div style="left:649.50px;top:330.00px;width:1.00px;height:2.00px;background:#d8d8d8"></div>
<div style="left:649.50px;top:334.00px;width:1.00px;height:2.00px;background:#d8d8d8"></div>
<div style="left:649.50px;top:338.00px;width:1.00px;height:2.00px;background:#d8d8d8"></div>
<div style="left:649.50px;top:342.00px;width:1.00px;height:2.00px;background:#d8d8d8"></div>
<div style="left:649.50px;top:346.00px;width:1.00px;height:2.00px;background:#d8d8d8"></div>
<div style="left:649.50px;top:350.00px;width:1.00px;height:2.00px;background:#d8d8d8"></div>
<div style="left:649.50px;top:354.00px;width:1.00px;height:2.00px;background:#d8d8d8"></div>
<div style="left:649.50px;top:358.00px;width:1.00px;height:2.00px;background:#d8d8d8"></div>
<div style="left:649.50px;top:362.00px;width:1.00px;height:2.00px;background:#d8d8d8"></div>
<div style="left:649.50px;top:366.00px;width:1.00px;height:2.00px;background:#d8d8d8"></div>
<div style="left:649.50px;top:370.00px;width:1.00px;height:2.00px;background:#d8d8d8"></div>
<div style="left:649.50px;top:374.00px;width:1.00px;height:2.00px;background:#d8d8d8"></div>
<div style="left:649.50px;top:378.00px;width:1.00px;height:2.00px;background:#d8d8d8"></div>
<div style="left:649.50px;top:382.00px;width:1.00px;height:2.00px;background:#d8d8d8"></div>
<div style="left:649.50px;top:386.00px;width:1.00px;height:2.00px;background:#d8d8d8"></div>
<div style="left:649.50px;top:390.00px;width:1.00px;height:2.00px;background:#d8d8d8"></div>
<div style="left:649.50px;top:394.00px;width:1.00px;height:2.00px;background:#d8d8d8"></div>
<div style="left:649.50px;top:398.00px;width:1.00px;height:2.00px;background:#d8d8d8"></div>
<div style="left:649.50px;top:402.00px;width:1.00px;height:2.00px;background:#d8d8d8"></div>
<div style="left:649.50px;top:406.00px;width:1.00px;height:2.00px;background:#d8d8d8"></div>
<div style="left:649.50px;top:410.00px;width:1.00px;height:2.00px;background:#d8d8d8"></div>
<div style="left:649.50px;top:414.00px;width:1.00px;height:2.00px;background:#d8d8d8"></div>
<div style="left:649.50px;top:418.00px;width:1.00px;height:2.00px;background:#d8d8d8"></div>
<div style="left:649.50px;top:422.00px;width:1.00px;height:2.00px;background:#d8d8d8"></div>
<div style="left:649.50px;top:426.00px;width:1.00px;height:2.00px;background:#d8d8d8"></div>
<div style="left:649.50px;top:430.00px;width:1.00px;height:2.00px;background:#d8d8d8"></div>
<div style="left:649.50px;top:434.00px;width:1.00px;height:2.00px;background:#d8d8d8"></div>
<div style="left:649.50px;top:438.00px;width:1.00px;height:2.00px;background:#d8d8d8"></div>
<div style="left:649.50px;top:442.00px;width:1.00px;height:2.00px;background:#d8d8d8"></div>
<div style="left:649.50px;top:446.00px;width:1.00px;height:2.00px;background:#d8d8d8"></div>
<div style="left:649.50px;top:450.00px;width:1.00px;height:2.00px;background:#d8d8d8"></div>
<div style="left:649.50px;top:454.00px;width:1.00px;height:2.00px;background:#d8d8d8"></div>
<div style="left:649.50px;top:458.00px;width:1.00px;height:2.00px;background:#d8d8d8"></div>
<div style="left:649.50px;top:462.00px;width:1.00px;height:2.00px;background:#d8d8d8"></div>
<div style="left:649.50px;top:466.00px;width:1.00px;height:2.00px;background:#d8d8d8"></div>
<div style="left:649.50px;top:470.00px;width:1.00px;height:2.00px;background:#d8d8d8"></div>
<div style="left:649.50px;top:474.00px;width:1.00px;height:2.00px;background:#d8d8d8"></div>
<div style="left:649.50px;top:478.00px;width:1.00px;height:2.00px;background:#d8d8d8"></div>
<div style="left:649.50px;top:482.00px;width:1.00px;height:2.00px;background:#d8d8d8"></div>
<div style="left:649.50px;top:486.00px;width:1.00px;height:2.00px;background:#d8d8d8"></div>
<div style="left:649.50px;top:490.00px;width:1.00px;height:2.00px;background:#d8d8d8"></div>
<div style="left:649.50px;top:494.00px;width:1.00px;height:2.00px;background:#d8d8d8"></div>
<div style="left:649.50px;top:498.00px;width:1.00px;height:2.00px;background:#d8d8d8"></div>
<div style="left:649.50px;top:502.00px;width:1.00px;height:2.00px;background:#d8d8d8"></div>
<div style="left:649.50px;top:506.00px;width:1.00px;height:2.00px;background:#d8d8d8"></div>
<div style="left:649.50px;top:510.00px;width:1.00px;height:2.00px;background:#d8d8d8"></div>
<div style="left:649.50px;top:514.00px;width:1.00px;height:2.00px;background:#d8d8d8"></div>
<div style="left:649.50px;top:518.00px;width:1.00px;height:2.00px;background:#d8d8d8"></div>
<div style="left:649.50px;top:522.00px;width:1.00px;height:2.00px;background:#d8d8d8"></div>
<div style="left:649.50px;top:526.00px;width:1.00px;height:2.00px;background:#d8d8d8"></div>
<div style="left:649.50px;top:530.00px;width:1.00px;height:2.00px;background:#d8d8d8"></div>
<div style="left:649.50px;top:534.00px;width:1.00px;height:2.00px;background:#d8d8d8"></div>
<div style="left:649.50px;top:538.00px;width:1.00px;height:2.00px;background:#d8d8d8"></div>
<div style="left:649.50px;top:542.00px;width:1.00px;height:2.00px;background:#d8d8d8"></div>
<div style="left:649.50px;top:546.00px;width:1.00px;height:2.00px;background:#d8d8d8"></div>
<div style="left:649.50px;top:550.00px;width:1.00px;height:2.00px;background:#d8d8d8"></div>
<div style="left:649.50px;top:554.00px;width:1.00px;height:2.00px;background:#d8d8d8"></div>
<div style="left:649.50px;top:558.00px;width:1.00px;height:2.00px;background:#d8d8d8"></div>
<div style="left:649.50px;top:562.00px;width:1.00px;height:2.00px;background:#d8d8d8"></div>
<div style="left:649.50px;top:566.00px;width:1.00px;height:2.00px;background:#d8d8d8"></div>
<div style="left:649.50px;top:570.00px;width:1.00px;height:2.00px;background:#d8d8d8"></div>
<div style="left:649.50px;top:574.00px;width:1.00px;height:2.00px;background:#d8d8d8"></div>
<div style="left:649.50px;top:578.00px;width:1.00px;height:2.00px;background:#d8d8d8"></div>
<div style="left:649.50px;top:582.00px;width:1.00px;height:2.00px;background:#d8d8d8"></div>
<div style="left:649.50px;top:586.00px;width:1.00px;height:2.00px;background:#d8d8d8"></div>
<div style="left:649.50px;top:590.00px;width:1.00px;height:2.00px;background:#d8d8d8"></div>
<div style="left:649.50px;top:594.00px;width:1.00px;height:2.00px;background:#d8d8d8"></div>
<div style="left:649.50px;top:598.00px;width:1.00px;height:2.00px;background:#d8d8d8"></div>
<div style="left:649.50px;top:602.00px;width:1.00px;height:2.00px;background:#d8d8d8"></div>
<div style="left:649.50px;top:606.00px;width:1.00px;height:2.00px;background:#d8d8d8"></div>
<div style="left:649.50px;top:610.00px;width:1.00px;height:2.00px;background:#d8d8d8"></div>
<div style="left:649.50px;top:614.00px;width:1.00px;height:2.00px;background:#d8d8d8"></div>
<div style="left:649.50px;top:618.00px;width:1.00px;height:2.00px;background:#d8d8d8"></div>
<div style="left:649.50px;top:622.00px;width:1.00px;height:2.00px;background:#d8d8d8"></div>
<div style="left:649.50px;top:626.00px;width:1.00px;height:2.00px;background:#d8d8d8"></div>
<div style="left:649.50px;top:630.00px;width:1.00px;height:2.00px;background:#d8d8d8"></div>
<div style="left:649.50px;top:634.00px;width:1.00px;height:2.00px;background:#d8d8d8"></div>
<div style="left:649.50px;top:638.00px;width:1.00px;height:2.00px;background:#d8d8d8"></div>
<div style="left:649.50px;top:642.00px;width:1.00px;height:2.00px;background:#d8d8d8"></div>
<div style="left:649.50px;top:646.00px;width:1.00px;height:2.00px;background:#d8d8d8"></div>
<div style="left:649.50px;top:650.00px;width:1.00px;height:2.00px;background:#d8d8d8"></div>
<div style="left:649.50px;top:654.00px;width:1.00px;height:2.00px;background:#d8d8d8"></div>
<div style="left:649.50px;top:658.00px;width:1.00px;height:2.00px;background:#d8d8d8"></div>
<div style="left:649.50px;top:662.00px;width:1.00px;height:2.00px;background:#d8d8d8"></div>
<div style="left:649.50px;top:666.00px;width:1.00px;height:2.00px;background:#d8d8d8"></div>
<div style="left:649.50px;top:670.00px;width:1.00px;height:2.00px;background:#d8d8d8"></div>
<div style="left:649.50px;top:674.00px;width:1.00px;height:2.00px;background:#d8d8d8"></div>
<div style="left:649.50px;top:678.00px;width:1.00px;height:2.00px;background:#d8d8d8"></div>
<div style="left:649.50px;top:682.00px;width:1.00px;height:2.00px;background:#d8d8d8"></div>
<div style="left:649.50px;top:686.00px;width:1.00px;height:2.00px;background:#d8d8d8"></div>
<div style="left:649.50px;top:690.00px;width:1.00px;height:2.00px;background:#d8d8d8"></div>
<div style="left:649.50px;top:694.00px;width:1.00px;height:2.00px;background:#d8d8d8"></div>
<div style="left:649.50px;top:698.00px;width:1.00px;height:2.00px;background:#d8d8d8"></div>
<div style="left:649.50px;top:702.00px;width:1.00px;height:2.00px;background:#d8d8d8"></div>
<div style="left:649.50px;top:706.00px;width:1.00px;height:2.00px;background:#d8d8d8"></div>
<div style="left:649.50px;top:710.00px;width:1.00px;height:2.00px;background:#d8d8d8"></div>
<div style="left:649.50px;top:714.00px;width:1.00px;height:2.00px;background:#d8d8d8"></div>
<div style="left:649.50px;top:718.00px;width:1.00px;height:2.00px;background:#d8d8d8"></div>
<div class="t" style="left:656.00px;top:170.30px;font-size:14px;color:#47a17a;font-weight:400;">21/08/2025 (USD)</div>
<div class="t" style="left:655.70px;top:200.70px;font-size:14px;color:#6a6a6a;font-weight:400;">Bank account:</div>
<div class="t" style="left:655.70px;top:229.50px;font-size:14px;color:#6a6a6a;font-weight:400;">IBAN:</div>
<div class="t" style="left:707.70px;top:229.50px;font-size:14px;color:#3a3a3a;font-weight:400;">BG03BU</div>
<div style="left:762.00px;top:235.50px;width:131.00px;height:10.50px;background:#c2bcc4;filter:blur(2.2px);border-radius:3px;opacity:.8"></div>
<div style="left:656.00px;top:260.50px;width:230.00px;height:1.00px;background:#c4c4c4"></div>
<div style="left:656.00px;top:322.00px;width:230.00px;height:1.00px;background:#c4c4c4"></div>
<div style="left:656.00px;top:383.60px;width:230.00px;height:1.00px;background:#c4c4c4"></div>
<div class="t" style="left:655.70px;top:260.00px;font-size:14px;color:#8a8a8a;font-weight:400;">Opening balance</div>
<div class="t" style="right:387.40px;text-align:right;top:286.80px;font-size:14px;color:#444;font-weight:400;">52,808.17</div>
<div class="t" style="left:655.70px;top:321.00px;font-size:14px;color:#8a8a8a;font-weight:400;">Inflow</div>
<div class="t" style="right:387.40px;text-align:right;top:347.70px;font-size:14px;color:#5aa05a;font-weight:400;">0.00</div>
<div class="t" style="left:655.70px;top:382.00px;font-size:14px;color:#8a8a8a;font-weight:400;">Outflow</div>
<div class="t" style="right:387.40px;text-align:right;top:408.60px;font-size:14px;color:#c9404c;font-weight:400;">0.00</div>
<div style="left:70.00px;top:422.00px;width:1201.50px;height:555.00px;background:#fff;border:2px solid #0a0a0a;border-radius:3px;box-shadow:4px 6px 6px -1px rgba(0,0,0,0.38)"></div>
<div style="left:72.00px;top:424.00px;width:1197.50px;height:53.50px;background:#fae89c;border-bottom:1px solid #e6d186"></div>
<div style="left:89.40px;top:443.40px;width:14.20px;height:2.10px;background:#5b5038;border-radius:1px"></div>
<div style="left:89.40px;top:447.50px;width:14.20px;height:2.10px;background:#5b5038;border-radius:1px"></div>
<div style="left:89.40px;top:451.60px;width:14.20px;height:2.10px;background:#5b5038;border-radius:1px"></div>
<div style="left:89.40px;top:455.70px;width:14.20px;height:2.10px;background:#5b5038;border-radius:1px"></div>
<div style="left:0;top:0;width:1280px;height:984px;clip-path:inset(424px 10px 507px 72px)">
<div class="t" style="left:120.20px;top:435.00px;font-size:13.5px;color:#625842;font-weight:400;-webkit-text-stroke:0.28px currentColor">Главное</div>
<div class="t" style="left:237.70px;top:435.00px;font-size:13.5px;color:#625842;font-weight:400;-webkit-text-stroke:0.28px currentColor">CRM</div>
<div class="t" style="left:333.45px;top:435.00px;font-size:13.5px;color:#625842;font-weight:400;-webkit-text-stroke:0.28px currentColor">Продажи</div>
<div class="t" style="left:455.45px;top:435.00px;font-size:13.5px;color:#625842;font-weight:400;-webkit-text-stroke:0.28px currentColor">Закупки</div>
<div class="t" style="left:569.70px;top:435.00px;font-size:13.5px;color:#625842;font-weight:400;-webkit-text-stroke:0.28px currentColor">Казначейство</div>
<div class="t" style="left:720.95px;top:435.00px;font-size:13.5px;color:#625842;font-weight:400;-webkit-text-stroke:0.28px currentColor">Склад</div>
<div class="t" style="left:1048.70px;top:435.00px;font-size:13.5px;color:#625842;font-weight:400;-webkit-text-stroke:0.28px currentColor">Анализ</div>
<div class="t" style="left:1160.20px;top:435.00px;font-size:13.5px;color:#625842;font-weight:400;-webkit-text-stroke:0.28px currentColor">Финансовый учет</div>
<div class="t" style="left:825.45px;top:433.75px;font-size:13.5px;color:#625842;font-weight:400;-webkit-text-stroke:0.28px currentColor">Управление</div>
<div class="t" style="left:825.45px;top:450.30px;font-size:13.5px;color:#625842;font-weight:400;-webkit-text-stroke:0.28px currentColor">человеческим капиталом</div>
</div>
<svg style="position:absolute;left:204.50px;top:442.00px" width="18" height="17" viewBox="0 0 18 17"><rect x="1" y="0.5" width="16" height="2" rx="1" fill="#5b5038"/><rect x="0" y="3.5" width="18" height="13" rx="2" fill="#5b5038"/><circle cx="6" cy="8" r="2" fill="#f5e6b0"/><path d="M2.5 14 Q6 9.5 9.5 14Z" fill="#f5e6b0"/><rect x="11" y="7" width="5" height="1.3" fill="#e8d9a0"/><rect x="11" y="10" width="5" height="1.3" fill="#e8d9a0"/></svg>
<svg style="position:absolute;left:300.00px;top:443.50px" width="17" height="15" viewBox="0 0 17 15"><path d="M4 6 L8.5 1 L13 6" stroke="#5b5038" stroke-width="1.6" fill="none"/><path d="M0 6H17V8.5H16L14 14.5H3L1 8.5H0Z" fill="#5b5038"/><path d="M5 9V13M8.5 9V13M12 9V13" stroke="#f5e6b0" stroke-width="1"/></svg>
<svg style="position:absolute;left:422.50px;top:444.00px" width="18" height="14" viewBox="0 0 18 14"><rect x="0" y="0" width="10" height="9.5" fill="#5b5038"/><path d="M11 3H14.5L17.5 7V10H11Z" fill="#5b5038"/><path d="M12.3 4.3H14L16 7H12.3Z" fill="#f5e6b0"/><rect x="0" y="9.5" width="18" height="1.5" fill="#5b5038"/><circle cx="3.5" cy="11.8" r="2" fill="#5b5038"/><circle cx="14" cy="11.8" r="2" fill="#5b5038"/></svg>
<svg style="position:absolute;left:538.00px;top:443.00px" width="16" height="16" viewBox="0 0 16 16"><rect x="0" y="0" width="16" height="16" rx="3" fill="#5b5038"/><path d="M11.5 4.2 A4.6 4.6 0 1 0 11.5 11.8" stroke="#f1e2ae" stroke-width="1.8" fill="none"/><path d="M4 7H9M4 9H9" stroke="#f1e2ae" stroke-width="1"/></svg>
<svg style="position:absolute;left:688.75px;top:443.00px" width="17" height="15" viewBox="0 0 17 15"><path d="M0 1H2V10" stroke="#5b5038" stroke-width="1.5" fill="none"/><rect x="3" y="0" width="6" height="4.5" fill="#5b5038"/><rect x="10" y="0" width="6" height="4.5" fill="#5b5038"/><rect x="3" y="5.5" width="6" height="4.5" fill="#5b5038"/><rect x="10" y="5.5" width="6" height="4.5" fill="#5b5038"/><rect x="1" y="10.5" width="16" height="1.6" fill="#5b5038"/><circle cx="4" cy="13.3" r="1.7" fill="#5b5038"/><circle cx="14" cy="13.3" r="1.7" fill="#5b5038"/></svg>
<svg style="position:absolute;left:792.50px;top:442.50px" width="18" height="16" viewBox="0 0 18 16"><circle cx="11.5" cy="3.5" r="3.3" fill="#5b5038"/><path d="M7 13 Q8 7 11.5 7.5 Q16 7 18 12.5V14H9Z" fill="#5b5038"/><circle cx="6" cy="6.5" r="3.2" fill="#5b5038" stroke="#f5e6b0" stroke-width="0.8"/><path d="M0 16V14 Q1 10 6 10 Q11 10 12 14V16Z" fill="#5b5038" stroke="#f5e6b0" stroke-width="0.8"/></svg>
<svg style="position:absolute;left:1017.00px;top:443.50px" width="16" height="15" viewBox="0 0 16 15"><path d="M7 1.5 A6.5 6.5 0 1 0 13.5 8 H7Z" fill="#5b5038"/><path d="M8.5 0 A6.5 6.5 0 0 1 15 6.5 H8.5Z" fill="none" stroke="#5b5038" stroke-width="1.3"/></svg>
<svg style="position:absolute;left:1128.80px;top:443.50px" width="13" height="15" viewBox="0 0 13 15"><path d="M0.5 2 Q0.5 0.5 2 0.5 H9 L12.5 4 V13.5 Q12.5 14.5 11.5 14.5 H1.5 Q0.5 14.5 0.5 13.5Z" fill="#5b5038"/><path d="M2.5 2.5H8.5V5.5H2.5Z" fill="#e9dba6"/><rect x="0.5" y="7" width="12" height="1.2" fill="#e9dba6"/></svg>
<div style="left:84.50px;top:487.50px;width:74.25px;height:24.50px;background:linear-gradient(#ffffff,#f1f1f1);border:1px solid #c9c9c9;border-radius:2px;box-shadow:0 1px 1px rgba(0,0,0,0.18);"></div>
<div style="left:122.50px;top:488.50px;width:1.00px;height:22.50px;background:#c6c6c6"></div>
<svg style="position:absolute;left:96.00px;top:495.00px" width="15" height="10" viewBox="0 0 15 10"><path d="M0 5L6 0V3.5H15V6.5H6V10Z" fill="#5a5a5a"/></svg>
<svg style="position:absolute;left:132.00px;top:495.00px" width="15" height="10" viewBox="0 0 15 10"><path d="M15 5L9 0V3.5H0V6.5H9V10Z" fill="#c4c4c4"/></svg>
<svg style="position:absolute;left:169.50px;top:488.00px" width="22" height="22" viewBox="0 0 24 24"><path d="M12 1.5 L14.9 8.6 L22.5 9.1 L16.6 14 L18.5 21.5 L12 17.4 L5.5 21.5 L7.4 14 L1.5 9.1 L9.1 8.6Z" fill="#fff" stroke="#d0d0d0" stroke-width="1.3"/></svg>
<div class="t" style="left:199.70px;top:488.95px;font-size:19px;color:#2b2b2b;font-weight:400;">Инвойс поставщика 0000-000167 от 14.08.2025</div>
<div style="left:84.50px;top:521.00px;width:81.00px;height:27.00px;background:#ececec;border-radius:2px"></div>
<div class="t" style="left:94.70px;top:525.40px;font-size:13.5px;color:#555;font-weight:400;">Основное</div>
<div class="t" style="left:176.70px;top:525.40px;font-size:13.5px;color:#4a6ea6;font-weight:400;text-decoration:underline dotted #7a9ac8;text-underline-offset:2.5px;text-decoration-skip-ink:none">Анализ заказа</div>
<div class="t" style="left:287.20px;top:525.40px;font-size:13.5px;color:#4a6ea6;font-weight:400;text-decoration:underline dotted #7a9ac8;text-underline-offset:2.5px;text-decoration-skip-ink:none">Взаиморасчеты (кратко)</div>
<div class="t" style="left:460.70px;top:525.40px;font-size:13.5px;color:#4a6ea6;font-weight:400;text-decoration:underline dotted #7a9ac8;text-underline-offset:2.5px;text-decoration-skip-ink:none">Товары к получению</div>
<div class="t" style="left:609.70px;top:525.40px;font-size:13.5px;color:#4a6ea6;font-weight:400;text-decoration:underline dotted #7a9ac8;text-underline-offset:2.5px;text-decoration-skip-ink:none">Задачи</div>
<div class="t" style="left:675.70px;top:525.40px;font-size:13.5px;color:#4a6ea6;font-weight:400;text-decoration:underline dotted #7a9ac8;text-underline-offset:2.5px;text-decoration-skip-ink:none">Присоединенные файлы</div>
<div style="left:84.50px;top:563.00px;width:162.25px;height:26.00px;background:linear-gradient(#fbe13a,#f2cf00);border:1px solid #d9b400;border-radius:2px;box-shadow:0 1px 1px rgba(0,0,0,0.2)"></div>
<div class="t" style="left:97.70px;top:567.25px;font-size:13.5px;color:#3a3210;font-weight:700;">Провести и закрыть</div>
<div style="left:256.25px;top:563.00px;width:83.75px;height:26.00px;background:linear-gradient(#ffffff,#f1f1f1);border:1px solid #c9c9c9;border-radius:2px;box-shadow:0 1px 1px rgba(0,0,0,0.18);"></div>
<div class="t" style="left:269.20px;top:567.25px;font-size:13.5px;color:#525252;font-weight:400;">Записать</div>
<div style="left:360.00px;top:563.00px;width:85.75px;height:26.00px;background:linear-gradient(#ffffff,#f1f1f1);border:1px solid #c9c9c9;border-radius:2px;box-shadow:0 1px 1px rgba(0,0,0,0.18);"></div>
<div class="t" style="left:373.45px;top:567.25px;font-size:13.5px;color:#525252;font-weight:400;">Провести</div>
<div style="left:466.75px;top:563.00px;width:30.00px;height:26.00px;background:linear-gradient(#ffffff,#f1f1f1);border:1px solid #c9c9c9;border-radius:2px;box-shadow:0 1px 1px rgba(0,0,0,0.18);"></div>
<div style="left:474.5px;top:566.5px;font-size:8px;color:#5a7fb0;font-weight:700;line-height:10px">Дт</div>
<div style="left:480px;top:575px;font-size:8px;color:#d03030;font-weight:700;line-height:10px">Кт</div>
<div style="left:506.25px;top:563.00px;width:171.75px;height:26.00px;background:linear-gradient(#ffffff,#f1f1f1);border:1px solid #c9c9c9;border-radius:2px;box-shadow:0 1px 1px rgba(0,0,0,0.18);"></div>
<div class="t" style="left:519.70px;top:567.25px;font-size:13.5px;color:#525252;font-weight:400;">Создать на основании</div>
<svg style="position:absolute;left:666.50px;top:575.50px" width="5" height="3.5" viewBox="0 0 5 3.5"><path d="M0 0H5L2.5 3Z" fill="#444"/></svg>
<div style="left:688.75px;top:563.00px;width:41.75px;height:26.00px;background:linear-gradient(#ffffff,#f1f1f1);border:1px solid #c9c9c9;border-radius:2px;box-shadow:0 1px 1px rgba(0,0,0,0.18);"></div>
<svg style="position:absolute;left:696.00px;top:567.00px" width="18" height="18" viewBox="0 0 18 18"><path d="M1 1H9L12 4V16H1Z" fill="#f4dc7a" stroke="#d6b84a" stroke-width="1"/><circle cx="12" cy="13" r="4.3" fill="#fff" stroke="#555" stroke-width="1.4"/><path d="M12 10.5V13H14" stroke="#555" stroke-width="1.2" fill="none"/></svg>
<svg style="position:absolute;left:717.50px;top:575.50px" width="5" height="3.5" viewBox="0 0 5 3.5"><path d="M0 0H5L2.5 3Z" fill="#444"/></svg>
<div style="left:740.50px;top:563.00px;width:29.50px;height:26.00px;background:linear-gradient(#ffffff,#f1f1f1);border:1px solid #c9c9c9;border-radius:2px;box-shadow:0 1px 1px rgba(0,0,0,0.18);"></div>
<svg style="position:absolute;left:747.50px;top:569.00px" width="16" height="13" viewBox="0 0 16 13"><rect x="0.5" y="0.5" width="15" height="12" fill="#eef0f2" stroke="#9aa2aa"/><path d="M0.5 4H15.5M0.5 7.5H15.5M5.5 4V12.5M10.5 4V12.5" stroke="#b0b6bc" stroke-width="1"/><rect x="0.5" y="0.5" width="15" height="3" fill="#c8ccd2"/></svg>
<div style="left:791.25px;top:563.00px;width:184.25px;height:26.00px;background:linear-gradient(#ffffff,#f1f1f1);border:1px solid #c9c9c9;border-radius:2px;box-shadow:0 1px 1px rgba(0,0,0,0.18);"></div>
<svg style="position:absolute;left:800.00px;top:567.00px" width="13" height="17" viewBox="0 0 13 17"><path d="M0.5 0.5H8.5L12.5 4.5V16.5H0.5Z" fill="#f6f8fa" stroke="#9aa6b4"/><path d="M3 6H10M3 8.5H10M3 11H10" stroke="#7d93b0" stroke-width="1"/></svg>
<div class="t" style="left:820.45px;top:567.25px;font-size:13.5px;color:#525252;font-weight:400;">Связанные документы</div>
<div style="left:995.50px;top:563.00px;width:92.75px;height:26.00px;background:linear-gradient(#ffffff,#f1f1f1);border:1px solid #c9c9c9;border-radius:2px;box-shadow:0 1px 1px rgba(0,0,0,0.18);"></div>
<svg style="position:absolute;left:1003.00px;top:569.00px" width="16" height="14" viewBox="0 0 16 14"><rect x="3.5" y="0.5" width="9" height="4" fill="#fff" stroke="#3a5f8a"/><rect x="0" y="4" width="16" height="7" rx="2" fill="#3a6496"/><rect x="3.5" y="8.5" width="9" height="5" fill="#fff" stroke="#3a5f8a"/></svg>
<div class="t" style="left:1025.20px;top:567.25px;font-size:13.5px;color:#525252;font-weight:400;">Печать</div>
<svg style="position:absolute;left:1075.50px;top:575.50px" width="5" height="3.5" viewBox="0 0 5 3.5"><path d="M0 0H5L2.5 3Z" fill="#444"/></svg>
<div style="left:1190.00px;top:563.00px;width:59.50px;height:26.00px;background:linear-gradient(#ffffff,#f1f1f1);border:1px solid #c9c9c9;border-radius:2px;box-shadow:0 1px 1px rgba(0,0,0,0.18);"></div>
<div class="t" style="left:1203.45px;top:567.25px;font-size:13.5px;color:#525252;font-weight:400;">Еще</div>
<svg style="position:absolute;left:1236.50px;top:575.50px" width="5" height="3.5" viewBox="0 0 5 3.5"><path d="M0 0H5L2.5 3Z" fill="#444"/></svg>
<div class="t" style="left:84.20px;top:602.60px;font-size:13.5px;color:#5c5c5c;font-weight:400;">Поставщик:</div>
<div style="left:228.75px;top:599.00px;width:416.75px;height:25.00px;background:#fff;border:1px solid #bfbfbf;border-radius:2px;"></div>
<div style="left:602.50px;top:600.00px;width:1.00px;height:23.00px;background:#c6c6c6"></div>
<div style="left:623.75px;top:600.00px;width:1.00px;height:23.00px;background:#c6c6c6"></div>
<div class="t" style="left:232.70px;top:602.60px;font-size:13.5px;color:#444;font-weight:400;">IMT</div>
<div style="left:252.00px;top:607.50px;width:184.00px;height:8.00px;background:#c6c6c6;filter:blur(2.3px);border-radius:3px;opacity:.8"></div>
<svg style="position:absolute;left:610.50px;top:610.50px" width="5" height="3.5" viewBox="0 0 5 3.5"><path d="M0 0H5L2.5 3Z" fill="#444"/></svg>
<svg style="position:absolute;left:628.50px;top:606.00px" width="11" height="11" viewBox="0 0 11 11"><rect x="3.5" y="1.5" width="6" height="6" fill="none" stroke="#555"/><rect x="1.5" y="3.5" width="6" height="6" fill="#fff" stroke="#555"/></svg>
<div class="t" style="left:656.70px;top:599.30px;font-size:13.5px;color:#b38d9b;font-weight:400;text-decoration:underline;text-decoration-color:#a08890;text-underline-offset:1px;text-decoration-skip-ink:none">Не проверено</div>
<div class="t" style="left:84.20px;top:639.00px;font-size:13.5px;color:#5c5c5c;font-weight:400;">Документ-основание:</div>
<div style="left:228.00px;top:634.50px;width:417.50px;height:25.00px;background:#fff;border:1px solid #bfbfbf;border-radius:2px;"></div>
<div style="left:623.00px;top:635.50px;width:1.00px;height:23.00px;background:#c6c6c6"></div>
<div class="t" style="left:333.50px;width:600px;text-align:center;top:638.00px;font-size:9px;color:#999;font-weight:400;">...</div>
<div class="t" style="left:84.20px;top:674.75px;font-size:13.5px;color:#5c5c5c;font-weight:400;">Заказ:</div>
<div style="left:228.00px;top:671.00px;width:417.50px;height:25.25px;background:#fff;border:1px solid #bfbfbf;border-radius:2px;"></div>
<div style="left:602.00px;top:672.00px;width:1.00px;height:23.00px;background:#c6c6c6"></div>
<div style="left:623.00px;top:672.00px;width:1.00px;height:23.00px;background:#c6c6c6"></div>
<svg style="position:absolute;left:610.00px;top:682.50px" width="5" height="3.5" viewBox="0 0 5 3.5"><path d="M0 0H5L2.5 3Z" fill="#444"/></svg>
<svg style="position:absolute;left:628.00px;top:678.00px" width="11" height="11" viewBox="0 0 11 11"><rect x="3.5" y="1.5" width="6" height="6" fill="none" stroke="#555"/><rect x="1.5" y="3.5" width="6" height="6" fill="#fff" stroke="#555"/></svg>
<div style="left:655.75px;top:633.75px;width:30.00px;height:26.25px;background:linear-gradient(#ffffff,#f1f1f1);border:1px solid #c9c9c9;border-radius:2px;box-shadow:0 1px 1px rgba(0,0,0,0.18);"></div>
<svg style="position:absolute;left:662.00px;top:638.88px" width="17" height="16" viewBox="0 0 17 16"><path d="M4 3H12L15 6V15H4Z" fill="#e8f2e0" stroke="#9ab08a" stroke-width="1"/><path d="M1 8L6 3.5V6.5H11V9.5H6V12.5Z" fill="#3f9a3f"/></svg>
<div style="left:655.75px;top:670.50px;width:30.00px;height:25.75px;background:linear-gradient(#ffffff,#f1f1f1);border:1px solid #c9c9c9;border-radius:2px;box-shadow:0 1px 1px rgba(0,0,0,0.18);"></div>
<svg style="position:absolute;left:662.00px;top:675.38px" width="17" height="16" viewBox="0 0 17 16"><path d="M4 3H12L15 6V15H4Z" fill="#e8f2e0" stroke="#9ab08a" stroke-width="1"/><path d="M1 8L6 3.5V6.5H11V9.5H6V12.5Z" fill="#3f9a3f"/></svg>
<div class="t" style="left:760.45px;top:601.90px;font-size:13.5px;color:#5c5c5c;font-weight:400;">Номер:</div>
<div class="t" style="left:760.45px;top:637.00px;font-size:13.5px;color:#5c5c5c;font-weight:400;">Организация:</div>
<div class="t" style="left:760.45px;top:671.50px;font-size:13.5px;color:#5c5c5c;font-weight:400;">Тип инвойса:</div>
<div class="t" style="left:760.45px;top:705.70px;font-size:13.5px;color:#5c5c5c;font-weight:400;">Склад:</div>
<div class="t" style="left:760.45px;top:738.50px;font-size:13.5px;color:#5c5c5c;font-weight:400;">Счета учета:</div>
<div style="left:855.00px;top:599.00px;width:214.00px;height:25.00px;background:#fff;border:1px solid #bfbfbf;border-radius:2px;"></div>
<div class="t" style="left:859.20px;top:602.60px;font-size:13.5px;color:#444;font-weight:400;">0000-000167</div>
<div class="t" style="left:1079.20px;top:602.60px;font-size:13.5px;color:#5c5c5c;font-weight:400;">Дата:</div>
<div style="left:1122.50px;top:599.00px;width:125.50px;height:25.00px;background:#fff;border:1px solid #bfbfbf;border-radius:2px;"></div>
<div style="left:1226.25px;top:600.00px;width:1.00px;height:23.00px;background:#c6c6c6"></div>
<div style="left:0;top:0;width:1280px;height:984px;clip-path:inset(599px 54px 360px 1123px)">
<div class="t" style="left:1126.70px;top:602.60px;font-size:13.5px;color:#444;font-weight:400;">14.08.2025 12:00</div>
</div>
<svg style="position:absolute;left:1232.00px;top:606.50px" width="11" height="11" viewBox="0 0 11 11"><rect x="1.5" y="1.5" width="8.5" height="8" rx="1" fill="none" stroke="#555" stroke-width="1.3"/><rect x="1.5" y="1.5" width="8.5" height="2.5" fill="#555"/><path d="M3 6H8.5M3 8H8.5" stroke="#999" stroke-width="0.8"/></svg>
<div style="left:855.00px;top:633.75px;width:357.00px;height:25.00px;background:#fff;border:1px solid #bfbfbf;border-radius:2px;"></div>
<div style="left:1169.00px;top:634.75px;width:1.00px;height:23.00px;background:#c6c6c6"></div>
<div style="left:1190.30px;top:634.75px;width:1.00px;height:23.00px;background:#c6c6c6"></div>
<div class="t" style="left:859.20px;top:637.25px;font-size:13.5px;color:#444;font-weight:400;">Centr</div>
<div style="left:893.00px;top:642.50px;width:157.00px;height:8.00px;background:#c8c8c8;filter:blur(2.3px);border-radius:3px;opacity:.8"></div>
<svg style="position:absolute;left:1177.00px;top:645.50px" width="5" height="3.5" viewBox="0 0 5 3.5"><path d="M0 0H5L2.5 3Z" fill="#444"/></svg>
<svg style="position:absolute;left:1195.50px;top:641.00px" width="11" height="11" viewBox="0 0 11 11"><rect x="3.5" y="1.5" width="6" height="6" fill="none" stroke="#555"/><rect x="1.5" y="3.5" width="6" height="6" fill="#fff" stroke="#555"/></svg>
<div style="left:855.00px;top:668.75px;width:357.00px;height:24.25px;background:#fff;border:1px solid #bfbfbf;border-radius:2px;"></div>
<div style="left:1191.00px;top:669.75px;width:1.00px;height:22.25px;background:#c6c6c6"></div>
<div class="t" style="left:859.20px;top:672.25px;font-size:13.5px;color:#444;font-weight:400;">Инвойс</div>
<svg style="position:absolute;left:1199.00px;top:680.00px" width="5" height="3.5" viewBox="0 0 5 3.5"><path d="M0 0H5L2.5 3Z" fill="#444"/></svg>
<div style="left:855.00px;top:703.50px;width:357.00px;height:24.50px;background:#fff;border:1px solid #bfbfbf;border-radius:2px;"></div>
<div style="left:1169.50px;top:704.50px;width:1.00px;height:22.50px;background:#c6c6c6"></div>
<div style="left:1190.60px;top:704.50px;width:1.00px;height:22.50px;background:#c6c6c6"></div>
<div class="t" style="left:859.70px;top:706.30px;font-size:13.5px;color:#444;font-weight:400;">Goods in transit</div>
<svg style="position:absolute;left:1177.00px;top:714.50px" width="5" height="3.5" viewBox="0 0 5 3.5"><path d="M0 0H5L2.5 3Z" fill="#444"/></svg>
<svg style="position:absolute;left:1195.50px;top:710.00px" width="11" height="11" viewBox="0 0 11 11"><rect x="3.5" y="1.5" width="6" height="6" fill="none" stroke="#555"/><rect x="1.5" y="3.5" width="6" height="6" fill="#fff" stroke="#555"/></svg>
<div class="t" style="left:855.70px;top:738.80px;font-size:13.5px;color:#4a6ea6;font-weight:400;text-decoration:underline;text-underline-offset:1px;text-decoration-skip-ink:none">2010100, 1050100</div>
<div style="left:760.00px;top:767.20px;width:432.70px;height:21.10px;border:1px solid #dcdcdc;background:#fff"></div>
<div class="t" style="left:705.80px;width:600px;text-align:center;top:768.80px;font-size:13.5px;color:#4a6ea6;font-weight:400;text-decoration:underline;text-underline-offset:1px;text-decoration-skip-ink:none">EUR</div>
<div style="left:84.50px;top:826.00px;width:1165.50px;height:138.00px;border:1px solid #c9c9c9;border-bottom:none;background:#fff"></div>
<div style="left:84.50px;top:798.75px;width:69.25px;height:27.75px;background:#e7e7e7;border:1px solid #c9c9c9;border-radius:2px 2px 0 0"></div>
<div class="t" style="left:96.70px;top:802.60px;font-size:13.5px;color:#525252;font-weight:400;">Товары</div>
<div style="left:153.75px;top:798.75px;width:85.00px;height:28.75px;background:#fff;border:1px solid #c9c9c9;border-bottom:none;border-radius:2px 2px 0 0"></div>
<div class="t" style="left:164.70px;top:802.60px;font-size:13.5px;color:#525252;font-weight:400;">Услуги (1)</div>
<div style="left:238.75px;top:798.75px;width:105.00px;height:27.75px;background:#e7e7e7;border:1px solid #c9c9c9;border-radius:2px 2px 0 0"></div>
<div class="t" style="left:249.70px;top:802.60px;font-size:13.5px;color:#525252;font-weight:400;">Зачет аванса</div>
<div style="left:343.75px;top:798.75px;width:124.25px;height:27.75px;background:#e7e7e7;border:1px solid #c9c9c9;border-radius:2px 2px 0 0"></div>
<div class="t" style="left:355.95px;top:802.60px;font-size:13.5px;color:#525252;font-weight:400;">Условия оплаты</div>
<div style="left:468.00px;top:798.75px;width:204.50px;height:27.75px;background:#e7e7e7;border:1px solid #c9c9c9;border-radius:2px 2px 0 0"></div>
<div class="t" style="left:480.20px;top:802.60px;font-size:13.5px;color:#525252;font-weight:400;">Скидки за досрочную оплату</div>
<div style="left:672.50px;top:798.75px;width:211.25px;height:27.75px;background:#e7e7e7;border:1px solid #c9c9c9;border-radius:2px 2px 0 0"></div>
<div class="t" style="left:683.45px;top:802.60px;font-size:13.5px;color:#525252;font-weight:400;">Дополнительная информация</div>
<div style="left:883.75px;top:798.75px;width:53.00px;height:27.75px;background:#e7e7e7;border:1px solid #c9c9c9;border-radius:2px 2px 0 0"></div>
<div class="t" style="left:895.20px;top:802.60px;font-size:13.5px;color:#525252;font-weight:400;">CFM</div>
<div style="left:96.25px;top:837.50px;width:15.00px;height:14.00px;border:1px solid #aaa;border-radius:2px;background:#fff"></div>
<div class="t" style="left:117.70px;top:835.00px;font-size:13.5px;color:#606060;font-weight:400;">Распределить на товары</div>
<div style="left:95.50px;top:862.50px;width:85.75px;height:25.75px;background:linear-gradient(#ffffff,#f1f1f1);border:1px solid #c9c9c9;border-radius:2px;box-shadow:0 1px 1px rgba(0,0,0,0.18);"></div>
<div class="t" style="left:107.70px;top:866.40px;font-size:13.5px;color:#525252;font-weight:400;">Добавить</div>
<div style="left:202.50px;top:862.50px;width:59.25px;height:25.75px;background:linear-gradient(#ffffff,#f1f1f1);border:1px solid #c9c9c9;border-radius:2px;box-shadow:0 1px 1px rgba(0,0,0,0.18);"></div>
<div style="left:231.75px;top:863.50px;width:1.00px;height:23.75px;background:#d0d0d0"></div>
<svg style="position:absolute;left:210.50px;top:870.00px" width="12" height="13" viewBox="0 0 12 13"><path d="M6 0.5L12 6.5H8.5V12.5H3.5V6.5H0Z" fill="#3b8fd6"/></svg>
<svg style="position:absolute;left:240.00px;top:869.50px" width="12" height="13" viewBox="0 0 12 13"><path d="M6 12.5L12 6.5H8.5V0.5H3.5V6.5H0Z" fill="#3b8fd6"/></svg>
<div style="left:281.25px;top:862.50px;width:87.50px;height:25.75px;background:linear-gradient(#ffffff,#f1f1f1);border:1px solid #c9c9c9;border-radius:2px;box-shadow:0 1px 1px rgba(0,0,0,0.18);"></div>
<div class="t" style="left:294.70px;top:866.40px;font-size:13.5px;color:#525252;font-weight:400;">Выбрать</div>
<svg style="position:absolute;left:355.00px;top:875.00px" width="5" height="3.5" viewBox="0 0 5 3.5"><path d="M0 0H5L2.5 3Z" fill="#444"/></svg>
<div style="left:378.00px;top:862.50px;width:30.25px;height:25.75px;background:linear-gradient(#ffffff,#f1f1f1);border:1px solid #c9c9c9;border-radius:2px;box-shadow:0 1px 1px rgba(0,0,0,0.18);"></div>
<svg style="position:absolute;left:385.50px;top:868.50px" width="16" height="13" viewBox="0 0 16 13"><rect x="0.5" y="0.5" width="15" height="12" fill="#e8f4e4" stroke="#6a9a6a"/><rect x="0.5" y="0.5" width="15" height="2.5" fill="#4fa04f"/><path d="M0.5 6H15.5M0.5 9H15.5" stroke="#6a9a6a"/><path d="M6 5L8 8L10 5" stroke="#2a7a2a" fill="none"/></svg>
<div style="left:428.75px;top:862.50px;width:30.50px;height:25.75px;background:linear-gradient(#ffffff,#f1f1f1);border:1px solid #c9c9c9;border-radius:2px;box-shadow:0 1px 1px rgba(0,0,0,0.18);"></div>
<svg style="position:absolute;left:436.00px;top:867.00px" width="15" height="17" viewBox="0 0 15 17"><rect x="0.5" y="0.5" width="9" height="11" fill="#f0f3f7" stroke="#b0b8c4"/><rect x="4.5" y="4.5" width="9" height="11" fill="#f0f3f7" stroke="#b0b8c4"/></svg>
<div style="left:468.25px;top:862.50px;width:30.50px;height:25.75px;background:linear-gradient(#ffffff,#f1f1f1);border:1px solid #c9c9c9;border-radius:2px;box-shadow:0 1px 1px rgba(0,0,0,0.18);"></div>
<svg style="position:absolute;left:475.00px;top:867.00px" width="16" height="17" viewBox="0 0 16 17"><rect x="0.5" y="2" width="9" height="13" rx="1" fill="#c98a6a" stroke="#9a6a50"/><rect x="2.5" y="0.5" width="5" height="3" fill="#ddd" stroke="#888"/><rect x="6.5" y="7.5" width="8" height="9" fill="#f0f3f7" stroke="#b0b8c4"/></svg>
<div style="left:1178.75px;top:862.50px;width:59.25px;height:25.75px;background:linear-gradient(#ffffff,#f1f1f1);border:1px solid #c9c9c9;border-radius:2px;box-shadow:0 1px 1px rgba(0,0,0,0.18);"></div>
<div class="t" style="left:1191.70px;top:866.40px;font-size:13.5px;color:#525252;font-weight:400;">Еще</div>
<svg style="position:absolute;left:1225.50px;top:875.00px" width="5" height="3.5" viewBox="0 0 5 3.5"><path d="M0 0H5L2.5 3Z" fill="#444"/></svg>
<div style="left:0;top:0;width:1280px;height:984px;clip-path:inset(897px 41px 20px 95px)">
<div style="left:95.50px;top:898.00px;width:1142.50px;height:77.00px;border:1px solid #cfcfcf;border-bottom:none;background:#fff"></div>
<div style="left:96.50px;top:899.00px;width:1141.50px;height:30.50px;background:#f0f0f0;border-bottom:1px solid #d6d6d6"></div>
<div style="left:153.75px;top:899.00px;width:1.00px;height:30.00px;background:#d9d9d9"></div>
<div style="left:374.50px;top:899.00px;width:1.00px;height:30.00px;background:#d9d9d9"></div>
<div style="left:540.50px;top:899.00px;width:1.00px;height:30.00px;background:#d9d9d9"></div>
<div style="left:659.25px;top:899.00px;width:1.00px;height:30.00px;background:#d9d9d9"></div>
<div style="left:737.00px;top:899.00px;width:1.00px;height:30.00px;background:#d9d9d9"></div>
<div style="left:856.75px;top:899.00px;width:1.00px;height:30.00px;background:#d9d9d9"></div>
<div style="left:948.25px;top:899.00px;width:1.00px;height:30.00px;background:#d9d9d9"></div>
<div style="left:1067.50px;top:899.00px;width:1.00px;height:30.00px;background:#d9d9d9"></div>
<div style="left:1211.75px;top:899.00px;width:1.00px;height:30.00px;background:#d9d9d9"></div>
<div class="t" style="left:103.95px;top:904.75px;font-size:13.5px;color:#555;font-weight:400;">#</div>
<div class="t" style="left:162.20px;top:904.75px;font-size:13.5px;color:#555;font-weight:400;">Услуга</div>
<div class="t" style="left:383.45px;top:904.75px;font-size:13.5px;color:#555;font-weight:400;">Содержание</div>
<div class="t" style="left:548.95px;top:904.75px;font-size:13.5px;color:#555;font-weight:400;">Количество</div>
<div class="t" style="left:667.70px;top:904.75px;font-size:13.5px;color:#555;font-weight:400;">Ед. изм.</div>
<div class="t" style="left:745.95px;top:904.75px;font-size:13.5px;color:#555;font-weight:400;">Цена</div>
<div class="t" style="left:865.20px;top:904.75px;font-size:13.5px;color:#555;font-weight:400;">Скидки</div>
<div class="t" style="left:957.20px;top:904.75px;font-size:13.5px;color:#555;font-weight:400;">Сумма</div>
<div class="t" style="left:1075.95px;top:904.75px;font-size:13.5px;color:#555;font-weight:400;">Счета учета</div>
<div class="t" style="left:1220.45px;top:904.75px;font-size:13.5px;color:#555;font-weight:400;">Ст</div>
<div style="left:96.50px;top:929.50px;width:1141.50px;height:28.00px;background:#fcefc6"></div>
<div style="left:96.50px;top:929.50px;width:57.25px;height:28.00px;background:#f9dd8a"></div>
<div style="left:374.50px;top:929.50px;width:1.00px;height:28.00px;background:#f3e3b0"></div>
<div style="left:540.50px;top:929.50px;width:1.00px;height:28.00px;background:#f3e3b0"></div>
<div style="left:659.25px;top:929.50px;width:1.00px;height:28.00px;background:#f3e3b0"></div>
<div style="left:737.00px;top:929.50px;width:1.00px;height:28.00px;background:#f3e3b0"></div>
<div style="left:856.75px;top:929.50px;width:1.00px;height:28.00px;background:#f3e3b0"></div>
<div style="left:948.25px;top:929.50px;width:1.00px;height:28.00px;background:#f3e3b0"></div>
<div style="left:1067.50px;top:929.50px;width:1.00px;height:28.00px;background:#f3e3b0"></div>
<div style="left:1211.75px;top:929.50px;width:1.00px;height:28.00px;background:#f3e3b0"></div>
<div class="t" style="right:1133.90px;text-align:right;top:936.00px;font-size:13.5px;color:#3a3a3a;font-weight:400;">1</div>
<div class="t" style="left:162.20px;top:936.00px;font-size:13.5px;color:#3a3a3a;font-weight:400;">Air tickets</div>
<div class="t" style="right:628.65px;text-align:right;top:936.00px;font-size:13.5px;color:#3a3a3a;font-weight:400;">1,000</div>
<div class="t" style="left:667.20px;top:936.00px;font-size:13.5px;color:#3a3a3a;font-weight:400;">n</div>
<div class="t" style="right:431.40px;text-align:right;top:936.00px;font-size:13.5px;color:#3a3a3a;font-weight:400;">2 356,00</div>
<div class="t" style="right:220.65px;text-align:right;top:936.00px;font-size:13.5px;color:#3a3a3a;font-weight:400;">2 356,00</div>
<div class="t" style="left:1075.95px;top:936.00px;font-size:13.5px;color:#4a6080;font-weight:400;text-decoration:underline;text-underline-offset:1px;text-decoration-skip-ink:none">1020100</div>
<div class="t" style="left:1220.45px;top:936.00px;font-size:13.5px;color:#b8a888;font-weight:400;">&lt;Н</div>
<div style="left:1237.00px;top:898.00px;width:1.00px;height:66.00px;background:#cfcfcf"></div>
</div>
<svg style="position:absolute;left:1260.00px;top:606.00px" width="8" height="6" viewBox="0 0 8 6"><path d="M0 5H8L4 0Z" fill="#cfcfcf"/></svg>
<div style="left:1260.00px;top:622.50px;width:7.50px;height:318.00px;background:#c6c6c6;border-radius:4px"></div>
<svg style="position:absolute;left:1260.00px;top:950.00px" width="8" height="6" viewBox="0 0 8 6"><path d="M0 0H8L4 5Z" fill="#bdbdbd"/></svg>
<svg style="position:absolute;left:990.00px;top:816.00px" width="18" height="18" viewBox="0 0 18 18"><path d="M4 4 V14.5 L7.5 11.5 L10.5 16.5" stroke="#3a3a3a" stroke-width="1.4" fill="none"/><path d="M9.5 3.5 L15.5 10 L12 10.5" stroke="#3a3a3a" stroke-width="1.4" fill="none"/></svg>
<svg style="position:absolute;left:1050.00px;top:811.00px" width="12" height="12" viewBox="0 0 12 12"><path d="M3 9 V3 L9.5 9" stroke="#333" stroke-width="1.6" fill="none"/></svg>
</div></body></html>
